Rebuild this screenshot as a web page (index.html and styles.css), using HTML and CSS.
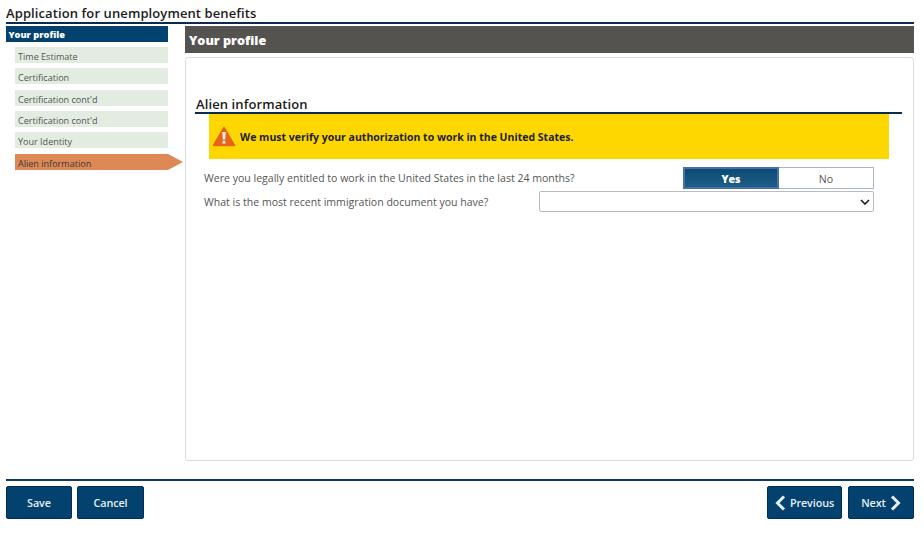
FILE: index.html
```
<!DOCTYPE html>
<html lang="en">
<head>
<meta charset="utf-8">
<title>Application for unemployment benefits</title>
<link rel="stylesheet" href="styles.css">
</head>
<body>
<div class="page">
  <h1 class="title">Application for unemployment benefits</h1>
  <div class="columns">
    <nav class="side">
      <div class="side-head">Your profile</div>
      <ul class="steps">
        <li class="step">Time Estimate</li>
        <li class="step">Certification</li>
        <li class="step">Certification cont'd</li>
        <li class="step">Certification cont'd</li>
        <li class="step">Your Identity</li>
        <li class="step current">Alien information</li>
      </ul>
    </nav>
    <main class="main">
      <div class="main-head">Your profile</div>
      <section class="card">
        <h2 class="section-title">Alien information</h2>
        <div class="banner">
          <svg class="warn" width="24" height="21" viewBox="0 0 24 21" aria-hidden="true">
            <path d="M12 1.5 L22.5 19.5 H1.5 Z" fill="#e8641b" stroke="#e8641b" stroke-width="1.5" stroke-linejoin="round"/>
            <path d="M10.2 6 H13.8 L13.1 13.5 H10.9 Z" fill="#fdf1e6"/>
            <rect x="10.6" y="14.8" width="2.8" height="2.8" fill="#fdf1e6"/>
          </svg>
          <span>We must verify your authorization to work in the United States.</span>
        </div>
        <div class="row first">
          <span class="label">Were you legally entitled to work in the United States in the last 24 months?</span>
          <div class="toggle">
            <span class="opt on">Yes</span>
            <span class="opt">No</span>
          </div>
        </div>
        <div class="row second">
          <span class="label">What is the most recent immigration document you have?</span>
          <div class="select">
            <svg width="10" height="6" viewBox="0 0 10 6" aria-hidden="true"><path d="M1 1 L5 5 L9 1" fill="none" stroke="#1a1a1a" stroke-width="1.6"/></svg>
          </div>
        </div>
      </section>
    </main>
  </div>
  <footer class="footer">
    <div class="btn-group">
      <button class="btn save">Save</button>
      <button class="btn cancel">Cancel</button>
    </div>
    <div class="btn-group nav-group">
      <button class="btn prev">
        <svg width="11" height="16" viewBox="0 0 11 16" aria-hidden="true"><path d="M9 1.5 L2.5 8 L9 14.5" fill="none" stroke="#e6eef4" stroke-width="3"/></svg>
        Previous
      </button>
      <button class="btn next">
        Next
        <svg width="11" height="16" viewBox="0 0 11 16" aria-hidden="true"><path d="M2 1.5 L8.5 8 L2 14.5" fill="none" stroke="#e6eef4" stroke-width="3"/></svg>
      </button>
    </div>
  </footer>
</div>
</body>
</html>
```
FILE: styles.css
```
* { box-sizing: border-box; }
html, body { margin: 0; padding: 0; background: #fff; }
body { font-family: "Open Sans", "Liberation Sans", sans-serif; color: #444; }
.page { width: 924px; height: 544px; padding: 0 10px 0 6px; overflow: hidden; }
.title { margin: 0; height: 24px; padding-top: 4px; border-bottom: 2px solid #0b2a4e; font-size: 13px; line-height: 18px; font-weight: 600; color: #1c1c1c; letter-spacing: 0.1px; }
.columns { display: flex; margin-top: 2px; height: 434px; }
.side { width: 179px; flex: none; }
.side-head { width: 162px; height: 16px; background: #03426e; color: #fff; font-size: 9.2px; line-height: 18px; font-weight: 800; padding-left: 2.5px; }
.steps { list-style: none; margin: 5px 0 0 9px; padding: 0; }
.step { width: 153px; height: 16px; margin-bottom: 5.33px; background: #e3ece1; color: #555; font-size: 9.05px; line-height: 19px; padding-left: 3px; overflow: visible; }
.step.current { position: relative; background: #dd8855; color: #3a3a3a; }
.step.current::after { content: ""; position: absolute; left: 100%; top: 0; border-left: 15px solid #dd8855; border-top: 8px solid transparent; border-bottom: 8px solid transparent; }
.main { flex: 1; min-width: 0; }
.main-head { height: 27px; background: #555350; color: #fff; font-size: 12.6px; line-height: 29px; font-weight: 800; padding-left: 4px; }
.card { height: 404px; margin-top: 4px; border: 1px solid #dcdcdc; border-radius: 3px; padding: 37px 11px 0 10px; }
.section-title { margin: 0 0 0 -1px; height: 19px; border-bottom: 2px solid #0b2a4e; font-size: 13px; line-height: 19px; font-weight: 600; color: #1c1c1c; padding-left: 1px; letter-spacing: 0.1px; }
.banner { display: flex; align-items: center; gap: 4px; height: 45px; margin: 0 13px; background: #fed700; padding-left: 3px; font-size: 10.5px; font-weight: 700; color: #222; }
.warn { flex: none; }
.row { display: flex; align-items: center; justify-content: space-between; margin: 0 28px 0 8px; font-size: 10.55px; color: #555; }
.row.first { margin-top: 8px; height: 22px; }
.row.second { margin-top: 2px; height: 21px; }
.toggle { display: flex; width: 191px; height: 22px; border: 1px solid #a9b4c4; background: #fff; font-size: 10.6px; }
.opt { flex: 1; display: flex; align-items: center; justify-content: center; padding-top: 1px; color: #555; }
.opt.on { flex: none; width: 96px; margin: -1px 0 -1px -1px; background: linear-gradient(#0c4a76, #1c5e88); border: 2px solid #4a6fa8; color: #fff; font-weight: 800; }
.select { display: flex; align-items: center; justify-content: flex-end; width: 335px; height: 21px; padding-right: 3px; border: 1px solid #b8bcc2; border-radius: 2px; background: #fff; }
.footer { display: flex; justify-content: space-between; margin-top: 19px; height: 42px; border-top: 2px solid #0b3a66; padding-top: 5px; }
.btn-group { display: flex; gap: 5px; }
.nav-group { gap: 6px; }
.btn { display: flex; align-items: center; justify-content: center; gap: 4px; height: 33px; padding: 0; background: #03426e; border: 1px solid #002d5a; border-radius: 2px; color: #e6eef4; font-family: inherit; font-size: 10.8px; font-weight: 600; letter-spacing: -0.1px; }
.save { width: 66px; }
.cancel { width: 67px; }
.prev { width: 75px; }
.next { width: 66px; }
```
